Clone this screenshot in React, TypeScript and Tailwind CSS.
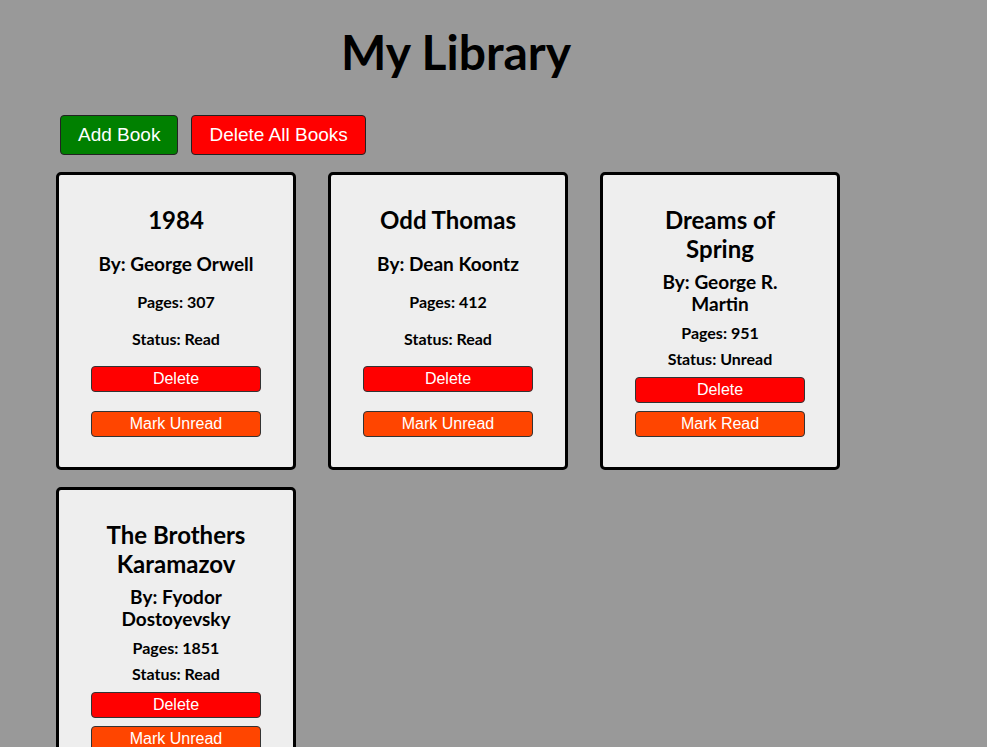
import React from "react";

type Book = { title: string; author: string; pages: number; read: boolean };

const books: Book[] = [
  { title: "1984", author: "George Orwell", pages: 307, read: true },
  { title: "Odd Thomas", author: "Dean Koontz", pages: 412, read: true },
  { title: "Dreams of Spring", author: "George R. Martin", pages: 951, read: false },
  { title: "The Brothers Karamazov", author: "Fyodor Dostoyevsky", pages: 1851, read: true },
];

function Card({ b }: { b: Book }) {
  return (
    <div className="w-[240px] h-[298px] bg-[#eeeeee] border-[3px] border-black rounded-[5px] flex flex-col items-center justify-between py-[30px] text-center text-black">
      <div className="w-[165px] text-[24px] leading-[29px] font-bold">{b.title}</div>
      <div className="w-[165px] text-[19px] leading-[22px] font-bold">By: {b.author}</div>
      <div className="text-[16px] leading-[18px] font-bold">Pages: {b.pages}</div>
      <div className="text-[16px] leading-[18px] font-bold">Status: {b.read ? "Read" : "Unread"}</div>
      <button className="w-[170px] h-[26px] bg-[#ff0000] text-white border border-[#333] rounded-[4px] text-[16px] leading-[20px] font-normal [font-family:'Liberation_Sans',Arial,sans-serif]">
        Delete
      </button>
      <button className="w-[170px] h-[26px] bg-[#ff4500] text-white border border-[#333] rounded-[4px] text-[16px] leading-[20px] font-normal [font-family:'Liberation_Sans',Arial,sans-serif]">
        {b.read ? "Mark Unread" : "Mark Read"}
      </button>
    </div>
  );
}

export default function App() {
  return (
    <div className="min-h-[747px] bg-[#999999] [font-family:Lato,'Noto_Sans',sans-serif]">
      <div className="pl-[56px]">
        <h1 className="w-[800px] text-center text-[48px] leading-[58px] font-bold text-black pt-[23px]">My Library</h1>
        <div className="flex gap-[13px] pl-[4px] mt-[34px] [font-family:'Liberation_Sans',Arial,sans-serif]">
          <button className="h-[40px] px-[17px] bg-[#008000] text-white text-[19px] border border-[#222] rounded-[4px]">
            Add Book
          </button>
          <button className="h-[40px] px-[17px] bg-[#ff0000] text-white text-[19px] border border-[#222] rounded-[4px]">
            Delete All Books
          </button>
        </div>
        <div className="grid grid-cols-[240px_240px_240px] gap-x-[32px] gap-y-[17px] mt-[17px]">
          {books.map((b) => (
            <Card key={b.title} b={b} />
          ))}
        </div>
      </div>
    </div>
  );
}
